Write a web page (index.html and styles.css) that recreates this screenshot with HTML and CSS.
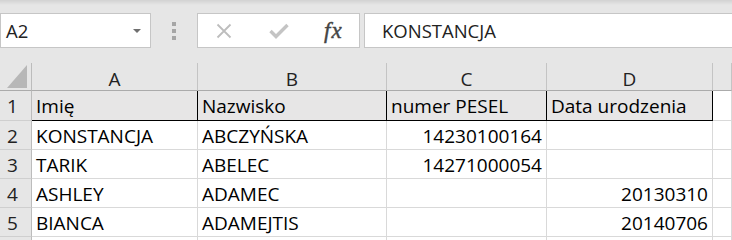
FILE: index.html
```html
<!DOCTYPE html>
<html lang="pl">
<head>
  <meta charset="UTF-8">
  <title>Arkusz</title>
  <link rel="stylesheet" href="styles.css">
</head>
<body>
  <div class="toolbar">
    <div class="namebox">
      <span class="ref">A2</span>
      <span class="arrow"></span>
    </div>
    <div class="splitter"><i></i><i></i><i></i></div>
    <div class="fbuttons">
      <svg class="icon" width="16" height="16" viewBox="0 0 16 16">
        <path d="M1.5 1.5 L14.5 14.5 M14.5 1.5 L1.5 14.5" stroke="#bdbdbd" stroke-width="1.8" fill="none"/>
      </svg>
      <svg class="icon" width="20" height="16" viewBox="0 0 20 16">
        <path d="M1.5 8 L7 13.5 L18.5 2" stroke="#c4c4c4" stroke-width="3.4" fill="none"/>
      </svg>
      <span class="fx">fx</span>
    </div>
    <div class="formula">KONSTANCJA</div>
  </div>

  <div class="sheet">
    <div class="row head">
      <div class="cell rh corner">
        <svg width="20" height="23" viewBox="0 0 20 23"><polygon points="20,0 20,23 0,23" fill="#b7b7b7"/></svg>
      </div>
      <div class="cell ch">A</div>
      <div class="cell ch">B</div>
      <div class="cell ch">C</div>
      <div class="cell ch">D</div>
      <div class="cell ch"></div>
    </div>
    <div class="row first">
      <div class="cell rh">1</div>
      <div class="cell title">Imię</div>
      <div class="cell title">Nazwisko</div>
      <div class="cell title">numer PESEL</div>
      <div class="cell title">Data urodzenia</div>
      <div class="cell"></div>
    </div>
    <div class="row">
      <div class="cell rh">2</div>
      <div class="cell">KONSTANCJA</div>
      <div class="cell">ABCZYŃSKA</div>
      <div class="cell num">14230100164</div>
      <div class="cell num"></div>
      <div class="cell"></div>
    </div>
    <div class="row">
      <div class="cell rh">3</div>
      <div class="cell">TARIK</div>
      <div class="cell">ABELEC</div>
      <div class="cell num">14271000054</div>
      <div class="cell num"></div>
      <div class="cell"></div>
    </div>
    <div class="row">
      <div class="cell rh">4</div>
      <div class="cell">ASHLEY</div>
      <div class="cell">ADAMEC</div>
      <div class="cell num"></div>
      <div class="cell num">20130310</div>
      <div class="cell"></div>
    </div>
    <div class="row">
      <div class="cell rh">5</div>
      <div class="cell">BIANCA</div>
      <div class="cell">ADAMEJTIS</div>
      <div class="cell num"></div>
      <div class="cell num">20140706</div>
      <div class="cell"></div>
    </div>
    <div class="row">
      <div class="cell rh"></div>
      <div class="cell"></div>
      <div class="cell"></div>
      <div class="cell"></div>
      <div class="cell"></div>
      <div class="cell"></div>
    </div>
  </div>
</body>
</html>
```

FILE: styles.css
```css
body { margin: 0; background: #e6e6e6; font-family: "Open Sans", "Liberation Sans", sans-serif; color: #000; overflow: hidden; }

.toolbar { display: flex; align-items: stretch; height: 35px; padding-top: 13px; background: linear-gradient(#d2d2d2 0, #e6e6e6 5px); }
.namebox { box-sizing: border-box; width: 151px; background: #fff; border: 1px solid #c6c6c6; display: flex; align-items: center; justify-content: space-between; padding: 0 9px 0 5px; }
.ref { font-size: 18.5px; color: #222; }
.arrow { width: 0; height: 0; border-left: 4px solid transparent; border-right: 4px solid transparent; border-top: 4px solid #6f6f6f; }
.splitter { width: 46px; display: flex; flex-direction: column; align-items: center; justify-content: center; gap: 3px; }
.splitter i { display: block; width: 4px; height: 4px; background: #a6a6a6; }
.fbuttons { box-sizing: border-box; width: 163px; background: #fff; border: 1px solid #c6c6c6; display: flex; align-items: center; padding-left: 18px; }
.fbuttons .icon + .icon { margin-left: 37px; }
.fx { margin-left: 35px; font-family: "Liberation Serif", "DejaVu Serif", serif; font-style: italic; font-size: 23px; color: #444; letter-spacing: 1px; -webkit-text-stroke: 0.4px #444; }
.formula { flex: 1; margin-left: 4px; margin-right: -2px; background: #fff; border: 1px solid #c6c6c6; display: flex; align-items: center; padding-left: 17px; font-size: 18.5px; color: #222; }

.sheet { margin-top: 15px; }
.row { display: grid; grid-template-columns: 32px 166px 189px 160px 166px 1fr; height: 29px; }
.cell { box-sizing: border-box; background: #fff; border-right: 1px solid #d9d9d9; border-bottom: 1px solid #d9d9d9; font-size: 19px; line-height: 29px; padding: 1px 4px 0; white-space: nowrap; overflow: hidden; }
.num { text-align: right; }
.rh { background: #e6e6e6; border-right-color: #bcbcbc; border-bottom-color: #cfcfcf; color: #222; padding-left: 7px; }
.head { height: 28px; }
.ch { background: #e6e6e6; border-right-color: #c4c4c4; border-bottom-color: #ababab; text-align: center; color: #222; line-height: 30px; }
.head .rh { border-bottom-color: #ababab; }
.corner { display: flex; align-items: flex-end; justify-content: flex-end; padding: 0 4px 2px 0; }
.first { height: 30px; }
.title { background: #e7e6e6; border-right-color: #000; border-bottom-color: #000; line-height: 28px; }
```
